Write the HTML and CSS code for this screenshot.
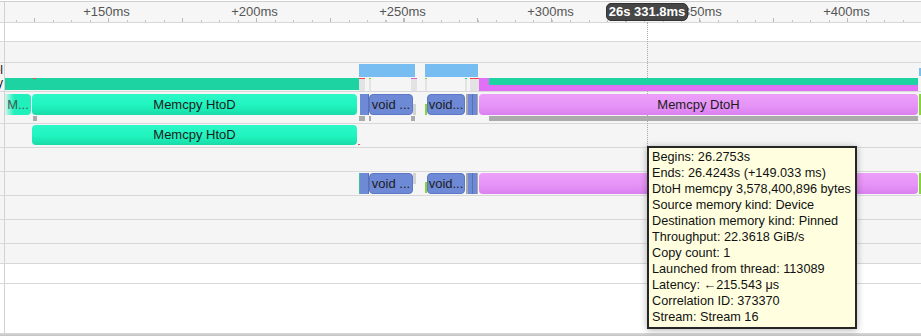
FILE: index.html
```html
<!DOCTYPE html>
<html lang="en">
<head>
  <meta charset="UTF-8" />
  <title>Timeline</title>
  <link rel="stylesheet" href="styles.css">
</head>
<body>

  <!-- cursor line sits under the bars -->
  <div class="cursor-line"></div>

  <div class="timeline">
    <!-- Ruler -->
    <div class="row ruler">
      <div class="gutter"></div>
      <div class="track ticks">
        <span class="tick-label">+150ms</span>
        <span class="tick-label">+200ms</span>
        <span class="tick-label">+250ms</span>
        <span class="tick-label">+300ms</span>
        <span class="tick-label">+350ms</span>
        <span class="tick-label">+400ms</span>
      </div>
    </div>

    <div class="row white h18"><div class="gutter"></div><div class="track"></div></div>
    <div class="row h20"><div class="gutter"></div><div class="track"></div></div>

    <!-- Summary lanes -->
    <div class="row h28">
      <div class="gutter">
        <div class="gutter-line">Kernel</div>
        <div class="gutter-line">Memory</div>
      </div>
      <div class="track">
        <div class="lane green" style="left:0;width:354px"></div>
        <div class="mark red" style="left:28px;width:3px"></div>
        <div class="top-bar" style="left:354px;width:56px"></div>
        <div class="top-bar" style="left:420px;width:53px"></div>
        <div class="seg red-top" style="left:354px;width:6px"></div>
        <div class="seg lime-top" style="left:364px;width:2px"></div>
        <div class="seg pink-top" style="left:406px;width:6px"></div>
        <div class="seg lime-top" style="left:420px;width:2px"></div>
        <div class="seg teal-top" style="left:460px;width:2px"></div>
        <div class="seg red-top" style="left:465px;width:9px"></div>
        <div class="lane pink" style="left:474px;width:439px"></div>
        <div class="lane green short" style="left:484px;width:429px"></div>
        <div class="top-bar tiny" style="left:914px;width:2px"></div>
      </div>
    </div>

    <!-- Memcpy row -->
    <div class="row h31">
      <div class="gutter"></div>
      <div class="track">
        <div class="bar htod fade" style="left:0;width:26px">M...</div>
        <div class="bar htod" style="left:27px;width:325px">Memcpy HtoD</div>
        <div class="bar thin" style="left:355px;width:9px"></div>
        <div class="bar void" style="left:364px;width:44px">void ...</div>
        <div class="bar gap" style="left:408px;width:3px"></div>
        <div class="bar lime low" style="left:420px;width:2px"></div>
        <div class="bar void" style="left:422px;width:38px">void...</div>
        <div class="bar thin stripes" style="left:461px;width:12px"></div>
        <div class="bar dtoh" style="left:474px;width:439px">Memcpy DtoH</div>
        <div class="bar lime" style="left:914px;width:2px"></div>
        <div class="under" style="left:28px;width:4px"></div>
        <div class="under" style="left:354px;width:6px"></div>
        <div class="under" style="left:364px;width:2px"></div>
        <div class="under" style="left:406px;width:4px"></div>
        <div class="under" style="left:484px;width:429px"></div>
      </div>
    </div>

    <div class="row h23">
      <div class="gutter"></div>
      <div class="track">
        <div class="bar htod single" style="left:27px;width:325px">Memcpy HtoD</div>
        <div class="mark red" style="left:353px;width:2px;top:20px"></div>
      </div>
    </div>

    <div class="row h23"><div class="gutter"></div><div class="track"></div></div>

    <div class="row h23">
      <div class="gutter"></div>
      <div class="track">
        <div class="bar thin edge single" style="left:354px;width:10px"></div>
        <div class="bar void single" style="left:364px;width:44px">void ...</div>
        <div class="bar gap single" style="left:408px;width:3px"></div>
        <div class="bar lime low" style="left:420px;width:2px;top:10px"></div>
        <div class="bar void single" style="left:422px;width:38px">void...</div>
        <div class="bar thin stripes single" style="left:461px;width:12px"></div>
        <div class="bar dtoh single" style="left:474px;width:439px">Memcpy DtoH</div>
        <div class="bar lime single" style="left:914px;width:2px"></div>
      </div>
    </div>

    <div class="row h23"><div class="gutter"></div><div class="track"></div></div>
    <div class="row h23"><div class="gutter"></div><div class="track"></div></div>
    <div class="row h19"><div class="gutter"></div><div class="track"></div></div>
    <div class="row white h19"><div class="gutter"></div><div class="track"></div></div>
    <div class="row white fill"><div class="gutter"></div><div class="track"></div></div>
  </div>
  <div class="hscroll"></div>

  <!-- Time cursor badge -->
  <div class="badge">26s 331.8ms</div>

  <!-- Hover tooltip -->
  <div class="tooltip">
    <div>Begins: 26.2753s</div>
    <div>Ends: 26.4243s (+149.033 ms)</div>
    <div>DtoH memcpy 3,578,400,896 bytes</div>
    <div>Source memory kind: Device</div>
    <div>Destination memory kind: Pinned</div>
    <div>Throughput: 22.3618 GiB/s</div>
    <div>Copy count: 1</div>
    <div>Launched from thread: 113089</div>
    <div>Latency: ←215.543 μs</div>
    <div>Correlation ID: 373370</div>
    <div>Stream: Stream 16</div>
  </div>

</body>
</html>
```

FILE: styles.css
```css
* { box-sizing: border-box; margin: 0; padding: 0; }
body {
  font-family: "Liberation Sans", Arial, sans-serif;
  background: #fff;
  color: #1a1a1a;
  width: 921px;
  height: 336px;
  overflow: hidden;
  position: relative;
}

.timeline {
  height: 333px;
  padding-top: 1px;
  display: flex;
  flex-direction: column;
}

.row {
  display: flex;
  flex: none;
  background: #f5f5f5;
  border-bottom: 1px solid #d8d8d8;
}
.row.white { background: #fff; }
.row.h18 { height: 19px; }
.row.h19 { height: 20px; }
.row.h20 { height: 21px; }
.row.h23 { height: 24px; }
.row.h28 { height: 29px; }
.row.h31 { height: 32px; }
.row.fill { flex: 1; border-bottom: none; }

.gutter {
  width: 5px;
  flex: none;
  border-right: 1px solid #d2d2d2;
  overflow: hidden;
  font-size: 12px;
  line-height: 13px;
  color: #111;
  padding: 1px 1px 0 0;
}
.gutter-line {
  display: flex;
  justify-content: flex-end;
  white-space: nowrap;
}

.track {
  flex: 1;
  position: relative;
}

/* Ruler */
.ruler {
  height: 22px;
  border-top: 1px solid #cfcfcf;
  background: #f6f6f6;
}
.ticks {
  display: flex;
  padding-left: 27.5px;
  background:
    repeating-linear-gradient(to right, #b8b8b8 0 1px, transparent 1px 73.9px) 29px 100% / 100% 4px no-repeat,
    repeating-linear-gradient(to right, #c4c4c4 0 1px, transparent 1px 18.475px) 10.5px 100% / 100% 2px no-repeat;
}
.tick-label {
  flex: none;
  width: 148px;
  text-align: center;
  font-size: 13px;
  line-height: 20px;
  color: #555;
}

/* Summary lanes */
.lane {
  position: absolute;
  top: 15px;
  height: 12px;
}
.lane.green { background: #1dd3a1; }
.lane.pink { background: #e070f5; height: 13px; }
.lane.short { height: 7px; }

.top-bar {
  position: absolute;
  top: 1px;
  height: 13px;
  background: #78bdf2;
}
.top-bar.tiny { top: 5px; height: 8px; }

.seg {
  position: absolute;
  top: 15px;
  height: 13px;
  background: #e3e3e3;
  border-top: 1px solid transparent;
}
.seg.red-top { border-top-color: #f04545; }
.seg.lime-top { border-top-color: #7bdc2a; }
.seg.pink-top { border-top-color: #e060d0; }
.seg.teal-top { border-top-color: #1dd3a1; }

.mark {
  position: absolute;
  top: 15px;
  height: 1px;
}
.mark.red { background: #f24b4b; }

/* Slices */
.bar {
  position: absolute;
  top: 2px;
  height: 21px;
  border-radius: 4px;
  font-size: 13px;
  line-height: 21px;
  text-align: center;
  white-space: nowrap;
  overflow: hidden;
  color: #1c1c1c;
}
.bar.single { top: 1px; }
.row.h23 .bar.htod { height: 20px; line-height: 20px; }

.htod {
  background: linear-gradient(#2cf8c7, #20f4bf 55%, #19dba8);
}
.htod.fade {
  background: linear-gradient(to right, rgba(32, 244, 191, 0.15), #20f0bc 9px);
  color: #3d5a52;
  border-radius: 0 4px 4px 0;
}
.dtoh {
  background: linear-gradient(#ec9ff9, #e694f7 55%, #da80f0);
}
.void {
  background: #6e8ad6;
  border: 1px solid #5c77c6;
  line-height: 19px;
}
.thin {
  background: #6e8ad6;
  border-radius: 0;
  border-right: 1px solid #5a71b8;
}
.thin.edge { border-left: 1px solid #35c98e; }
.thin.stripes {
  background: linear-gradient(to right, #a9a9a9 0 2px, #6e8ad6 2px 6px, #586fb5 6px 7px, #6e8ad6 7px 11px, #a9a9a9 11px);
  border: none;
}
.gap {
  background: #d2d2d2;
  border-radius: 0;
  top: 12px;
  height: 11px;
}
.lime {
  background: #84d43a;
  border-radius: 0;
}
.lime.low { top: 12px; height: 11px; }

.under {
  position: absolute;
  top: 24px;
  height: 5px;
  background: #ababab;
}

.hscroll {
  height: 3px;
  background: linear-gradient(#d9d9d9, #c2c2c2);
}

/* Overlays */
.cursor-line {
  position: absolute;
  left: 647px;
  top: 22px;
  height: 124px;
  border-left: 1px dotted #a8a8a8;
}

.badge {
  position: absolute;
  left: 606px;
  top: 3px;
  width: 82px;
  height: 18px;
  background: #464646;
  border: 1px solid #333;
  border-radius: 5px;
  color: #fff;
  font-size: 13px;
  font-weight: bold;
  line-height: 16px;
  text-align: center;
}

.tooltip {
  position: absolute;
  left: 647px;
  top: 146px;
  width: 210px;
  height: 183px;
  padding: 1px 3px;
  background: #ffffe0;
  border: 2px solid #262626;
  box-shadow: 0 1px 7px rgba(0, 0, 0, 0.3);
  font-size: 12.7px;
  line-height: 16px;
  color: #111;
  white-space: nowrap;
}
```
